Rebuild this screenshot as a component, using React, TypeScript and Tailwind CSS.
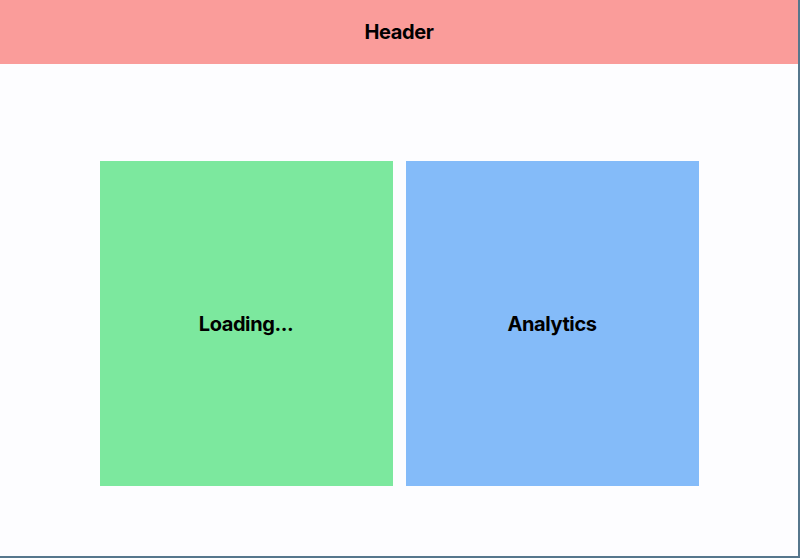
import React from "react";

export default function App() {
  return (
    <div
      className="w-[800px] h-[558px] bg-[#fdfdff] border-r-2 border-b-2 border-[#56778d] flex flex-col overflow-hidden"
      style={{ fontFamily: "Inter, 'Liberation Sans', sans-serif" }}
    >
      <header className="h-16 shrink-0 bg-[#fa9c9a] flex items-center justify-center">
        <h1 className="text-xl font-bold text-black tracking-[-0.02em]">Header</h1>
      </header>
      <main className="flex-1 flex justify-center items-start pt-[97px] gap-[13px]">
        <div className="w-[293px] h-[325px] bg-[#7ce89e] flex items-center justify-center">
          <span className="text-xl font-bold text-black tracking-[-0.02em]">Loading...</span>
        </div>
        <div className="w-[293px] h-[325px] bg-[#84bbf9] flex items-center justify-center">
          <span className="text-xl font-bold text-black tracking-[-0.02em]">Analytics</span>
        </div>
      </main>
    </div>
  );
}
